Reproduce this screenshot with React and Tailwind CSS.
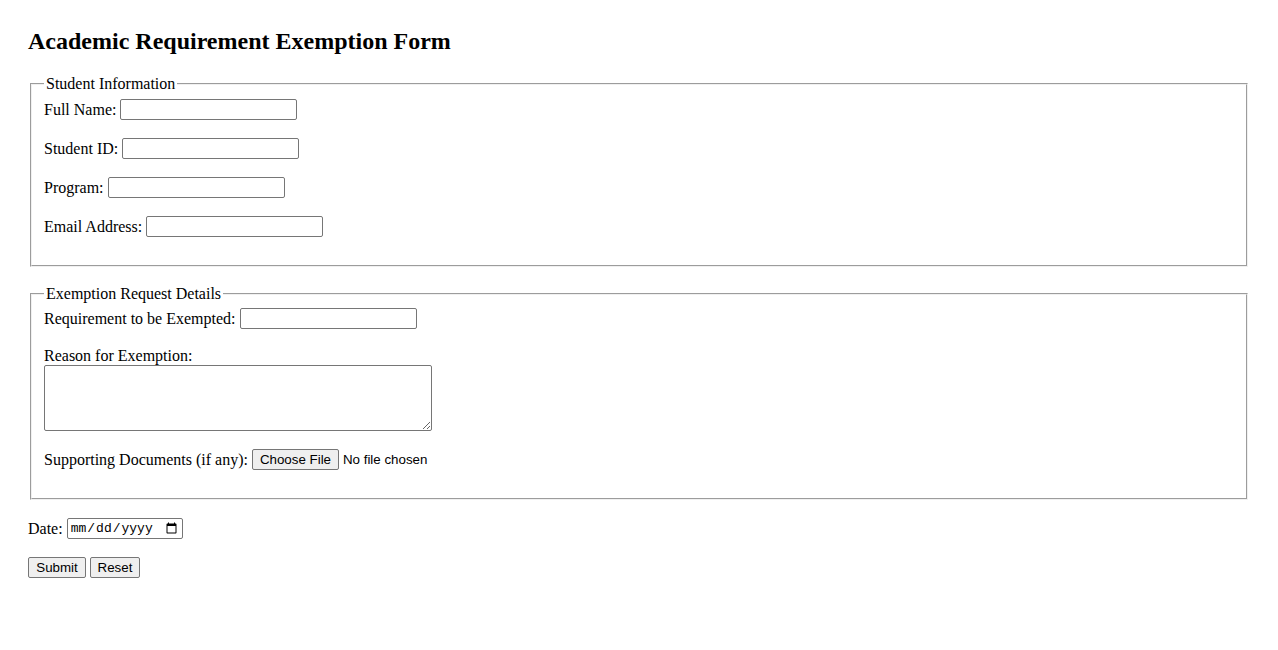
import React from "react";

const serif = "font-['Liberation_Serif',serif]";
const control =
  "border border-[#767676] rounded-[2px] bg-white px-[2px] text-[13.33px] leading-[15px] font-['Liberation_Sans',sans-serif] text-black";
const btn =
  "h-[21px] border border-[#767676] rounded-[2px] bg-[#efefef] text-[13.33px] leading-[15px] font-['Liberation_Sans',sans-serif] text-black text-center";

const TextRow = ({ label, name }) => (
  <div className="flex items-center gap-[4px] h-[21px]">
    <label htmlFor={name}>{label}</label>
    <input id={name} name={name} type="text" className={`w-[177px] h-[21px] ${control}`} />
  </div>
);

const App = () => {
  return (
    <div className={`min-h-screen bg-white text-black px-[28px] pt-[28px] text-[16px] leading-[18px] ${serif}`}>
      <h2 className="text-[24px] leading-[27px] font-bold mb-[20px]">
        Academic Requirement Exemption Form
      </h2>

      <form onSubmit={(e) => e.preventDefault()}>
        <fieldset className="mx-[2px] border-2 [border-style:groove]! border-[#f0f0f0] px-[12px] pb-[28px]">
          <legend className="px-[2px] leading-[18px]">Student Information</legend>
          <div className="pt-[6px] flex flex-col gap-[18px]">
            <TextRow label="Full Name:" name="fullName" />
            <TextRow label="Student ID:" name="studentId" />
            <TextRow label="Program:" name="program" />
            <TextRow label="Email Address:" name="email" />
          </div>
        </fieldset>

        <fieldset className="mt-[18px] mx-[2px] border-2 [border-style:groove]! border-[#f0f0f0] px-[12px] pb-[28px]">
          <legend className="px-[2px] leading-[18px]">Exemption Request Details</legend>
          <div className="pt-[5px] flex flex-col">
            <TextRow label="Requirement to be Exempted:" name="requirement" />

            <label htmlFor="reason" className="mt-[18px] block leading-[18px]">
              Reason for Exemption:
            </label>
            <textarea
              id="reason"
              name="reason"
              className={`block w-[388px] h-[66px] ${control}`}
            />

            {/* file picker */}
            <div className="mt-[18px] flex items-center gap-[4px] h-[21px]">
              <span>Supporting Documents (if any):</span>
              <button type="button" className={`w-[87px] ${btn}`}>
                Choose File
              </button>
              <span className="text-[13.33px] font-['Liberation_Sans',sans-serif]">No file chosen</span>
            </div>
          </div>
        </fieldset>

        <div className="mt-[18px] flex items-center gap-[4px] h-[21px]">
          <label htmlFor="date">Date:</label>
          <input
            id="date"
            name="date"
            type="date"
            className="w-[116px] h-[21px] border border-[#767676] rounded-[2px] bg-white px-[2px] text-[13px] font-['Liberation_Mono',monospace] text-black"
          />
        </div>

        <div className="mt-[18px] flex items-center gap-[4px]">
          <button type="submit" className={`w-[58px] ${btn}`}>
            Submit
          </button>
          <button type="reset" className={`w-[50px] ${btn}`}>
            Reset
          </button>
        </div>
      </form>
    </div>
  );
};

export default App;
